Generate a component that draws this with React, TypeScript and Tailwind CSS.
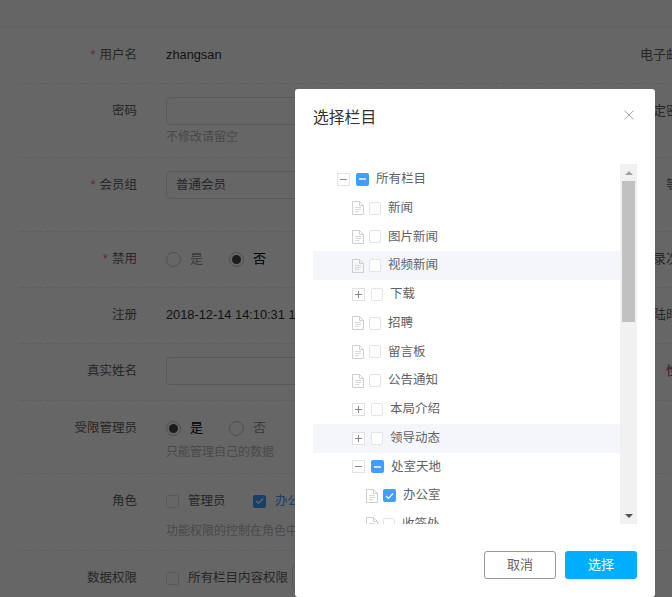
const LABEL_FONT = { fontFamily: '"Liberation Sans", "Noto Sans CJK SC", sans-serif' };

interface TreeNode {
  title: string;
  kind: "file" | "open" | "closed";
  depth: number;
  state?: "none" | "half" | "checked";
  hover?: boolean;
}

const NODES: TreeNode[] = [
  { title: "所有栏目", kind: "open", depth: 0, state: "half" },
  { title: "新闻", kind: "file", depth: 1 },
  { title: "图片新闻", kind: "file", depth: 1 },
  { title: "视频新闻", kind: "file", depth: 1, hover: true },
  { title: "下载", kind: "closed", depth: 1 },
  { title: "招聘", kind: "file", depth: 1 },
  { title: "留言板", kind: "file", depth: 1 },
  { title: "公告通知", kind: "file", depth: 1 },
  { title: "本局介绍", kind: "closed", depth: 1 },
  { title: "领导动态", kind: "closed", depth: 1, hover: true },
  { title: "处室天地", kind: "open", depth: 1, state: "half" },
  { title: "办公室", kind: "file", depth: 2, state: "checked" },
  { title: "收签处", kind: "file", depth: 2 },
];

function FileIcon() {
  return (
    <svg width="12" height="14" viewBox="0 0 12 14" className="shrink-0" fill="none">
      <path d="M.5.5h7L11.5 4.5V13.5H.5V.5Z" stroke="#cfcfcf" />
      <path d="M7.5 .5V4.5H11.5" stroke="#cfcfcf" />
      <path d="M3 6.5h6M3 8.5h6M3 10.5h4" stroke="#d8d8d8" />
    </svg>
  );
}

function Switcher({ open }: { open: boolean }) {
  return (
    <span className="relative h-[13px] w-[13px] shrink-0 border border-[#e2e2e2] bg-white">
      <span className="absolute left-[2px] top-[5px] h-px w-[7px] bg-[#8a8a8a]" />
      {!open && <span className="absolute left-[5px] top-[2px] h-[7px] w-px bg-[#8a8a8a]" />}
    </span>
  );
}

function TreeCheck({ state = "none" }: { state?: TreeNode["state"] }) {
  if (state === "none") {
    return <span className="h-[13px] w-[12px] shrink-0 rounded-[2px] border border-[#e2e4ec] bg-white" />;
  }
  return (
    <span className="flex h-[13px] w-[13px] shrink-0 items-center justify-center rounded-[2px] bg-[#409eff]">
      {state === "half" ? (
        <span className="h-[2px] w-[7px] bg-white/70" />
      ) : (
        <svg width="9" height="8" viewBox="0 0 9 8" fill="none">
          <path d="M1 4l2.5 2.5L8 1.5" stroke="#fff" strokeWidth="1.2" />
        </svg>
      )}
    </span>
  );
}

function TreeRow({ node }: { node: TreeNode }) {
  const indent = node.depth === 0 ? "pl-[24px]" : node.depth === 1 ? "pl-[39px]" : "pl-[53px]";
  const isFile = node.kind === "file";
  return (
    <div className={`flex h-[28.75px] shrink-0 items-center ${indent} ${node.hover ? "bg-[#f5f6fa]" : ""}`}>
      {isFile ? <FileIcon /> : <Switcher open={node.kind === "open"} />}
      <span className={`flex ${isFile ? "ml-[5px]" : "ml-[6px]"}`}>
        <TreeCheck state={node.state} />
      </span>
      <span className="ml-[7px] text-[12.5px] text-[#606266]">{node.title}</span>
    </div>
  );
}

function Scrollbar() {
  return (
    <div className="flex w-[17px] shrink-0 flex-col items-center bg-[#f1f1f1]">
      <div className="flex h-[17px] w-full shrink-0 items-center justify-center">
        <span className="h-0 w-0 border-x-[4px] border-b-[4px] border-x-transparent border-b-[#a3a3a3]" />
      </div>
      <div className="h-[141px] w-[13px] bg-[#c1c1c1]" />
      <div className="flex-1" />
      <div className="flex h-[17px] w-full shrink-0 items-center justify-center">
        <span className="h-0 w-0 border-x-[4px] border-t-[4px] border-x-transparent border-t-[#505050]" />
      </div>
    </div>
  );
}

function Row({ height, label, required, right, children }: { height: string; label: string; required?: boolean; right?: string; children?: React.ReactNode }) {
  return (
    <div className={`ml-[20px] flex border-b border-dashed border-[#e8e8e8] pt-[13px] ${height}`}>
      <div className="flex h-[28px] w-[117px] shrink-0 items-center justify-end text-[12.5px] text-[#606266]">
        {required && <span className="mr-[4px] text-[#f56c6c]">*</span>}
        {label}
      </div>
      <div className="ml-[29px] w-[426px] shrink-0">{children}</div>
      <div className="flex h-[28px] w-[100px] shrink-0 items-center justify-end text-[#606266]">{right}</div>
    </div>
  );
}

function TextBox({ value }: { value?: string }) {
  return <div className="flex h-[28px] w-[400px] items-center rounded-[4px] border border-[#dcdfe6] px-[9px] text-[12.5px] text-[#606266]">{value}</div>;
}

function Hint({ className, children }: { className: string; children: React.ReactNode }) {
  return <div className={`text-[12px] leading-[20px] text-[#b4b7bd] ${className}`}>{children}</div>;
}

function Radio({ label, checked }: { label: string; checked?: boolean }) {
  return (
    <span className="flex w-[63px] items-center">
      <span className="flex h-[15px] w-[15px] items-center justify-center rounded-full border border-[#c8c8c8]">
        {checked && <span className="h-[9px] w-[9px] rounded-full bg-[#444]" />}
      </span>
      <span className={`ml-[9px] ${checked ? "text-black" : "text-[#909399]"}`}>{label}</span>
    </span>
  );
}

function Check({ label, checked, className }: { label: string; checked?: boolean; className?: string }) {
  return (
    <span className={`flex items-center ${className ?? ""}`}>
      {checked ? (
        <span className="flex h-[13px] w-[13px] shrink-0 items-center justify-center rounded-[2px] bg-[#409eff]">
          <svg width="9" height="8" viewBox="0 0 9 8" fill="none">
            <path d="M1 4l2.5 2.5L8 1.5" stroke="#fff" strokeWidth="1.2" />
          </svg>
        </span>
      ) : (
        <span className="h-[13px] w-[13px] shrink-0 rounded-[2px] border border-[#dcdfe6]" />
      )}
      <span className={`ml-[9px] whitespace-nowrap text-[12.5px] ${checked ? "text-[#409eff]" : "text-[#606266]"}`}>{label}</span>
    </span>
  );
}

export default function App() {
  return (
    <div className="relative h-[597px] w-[672px] overflow-hidden bg-white text-[13px]" style={LABEL_FONT}>
      <div className="h-[28px] border-b border-[#f0f0f0] bg-[#fbfbfb]" />
      <div className="w-[900px]">
        <Row height="h-[56px]" label="用户名" required right="电子邮箱">
          <div className="flex h-[28px] items-center text-[12.8px] text-[#303133]">zhangsan</div>
        </Row>
        <Row height="h-[74px]" label="密码" right="确定密码">
          <TextBox />
          <Hint className="mt-[2px]">不修改请留空</Hint>
        </Row>
        <Row height="h-[74px]" label="会员组" required right="等级">
          <TextBox value="普通会员" />
        </Row>
        <Row height="h-[56px]" label="禁用" required right="登录次数">
          <div className="flex h-[28px] items-center">
            <Radio label="是" />
            <Radio label="否" checked />
          </div>
        </Row>
        <Row height="h-[56px]" label="注册" right="登陆时间">
          <div className="flex h-[28px] items-center whitespace-nowrap text-[12.8px] text-[#303133]">2018-12-14 14:10:31 127.0.0.1</div>
        </Row>
        <Row height="h-[57px]" label="真实姓名" right="性别">
          <TextBox />
        </Row>
        <Row height="h-[73px]" label="受限管理员">
          <div className="flex h-[28px] items-center">
            <Radio label="是" checked />
            <Radio label="否" />
          </div>
          <Hint className="mt-0">只能管理自己的数据</Hint>
        </Row>
        <Row height="h-[77px]" label="角色">
          <div className="flex h-[28px] items-center">
            <Check label="管理员" className="w-[87px]" />
            <Check label="办公室管理员" checked />
          </div>
          <Hint className="mt-[6px]">功能权限的控制在角色中设置</Hint>
        </Row>
        <Row height="h-[56px]" label="数据权限">
          <div className="flex h-[28px] items-center gap-[4px]">
            <Check label="所有栏目内容权限" />
            <span className="h-[28px] w-[70px] rounded-[4px] border border-[#dcdfe6]" />
          </div>
        </Row>
      </div>

      {/* Dialog mask and window */}
      <div className="absolute inset-0 bg-black/60" />
      <div className="absolute left-[295px] top-[89px] flex h-[508px] w-[360px] flex-col rounded-[3px] bg-white">
        <div className="flex h-[75px] shrink-0 items-start justify-between pl-[18px] pr-[21px] pt-[17px]">
          <span className="text-[15.8px] leading-[24px] text-[#303133]">选择栏目</span>
          <svg width="10" height="10" viewBox="0 0 10 10" className="mt-[4px]" fill="none">
            <path d="M.5.5l9 9M9.5.5l-9 9" stroke="#a8a8a8" />
          </svg>
        </div>
        <div className="mx-[18px] flex h-[360px] shrink-0">
          <div className="flex min-w-0 flex-1 flex-col overflow-hidden pt-px">
            {NODES.map((node) => (
              <TreeRow key={node.title} node={node} />
            ))}
          </div>
          <Scrollbar />
        </div>
        <div className="mr-[18px] mt-[27px] flex justify-end gap-[9px]">
          <button className="h-[28px] w-[72px] rounded-[3px] border border-[#999] bg-white text-[13px] text-[#666]">取消</button>
          <button className="h-[28px] w-[72px] rounded-[3px] bg-[#00aeff] text-[13px] text-white">选择</button>
        </div>
      </div>
    </div>
  );
}
